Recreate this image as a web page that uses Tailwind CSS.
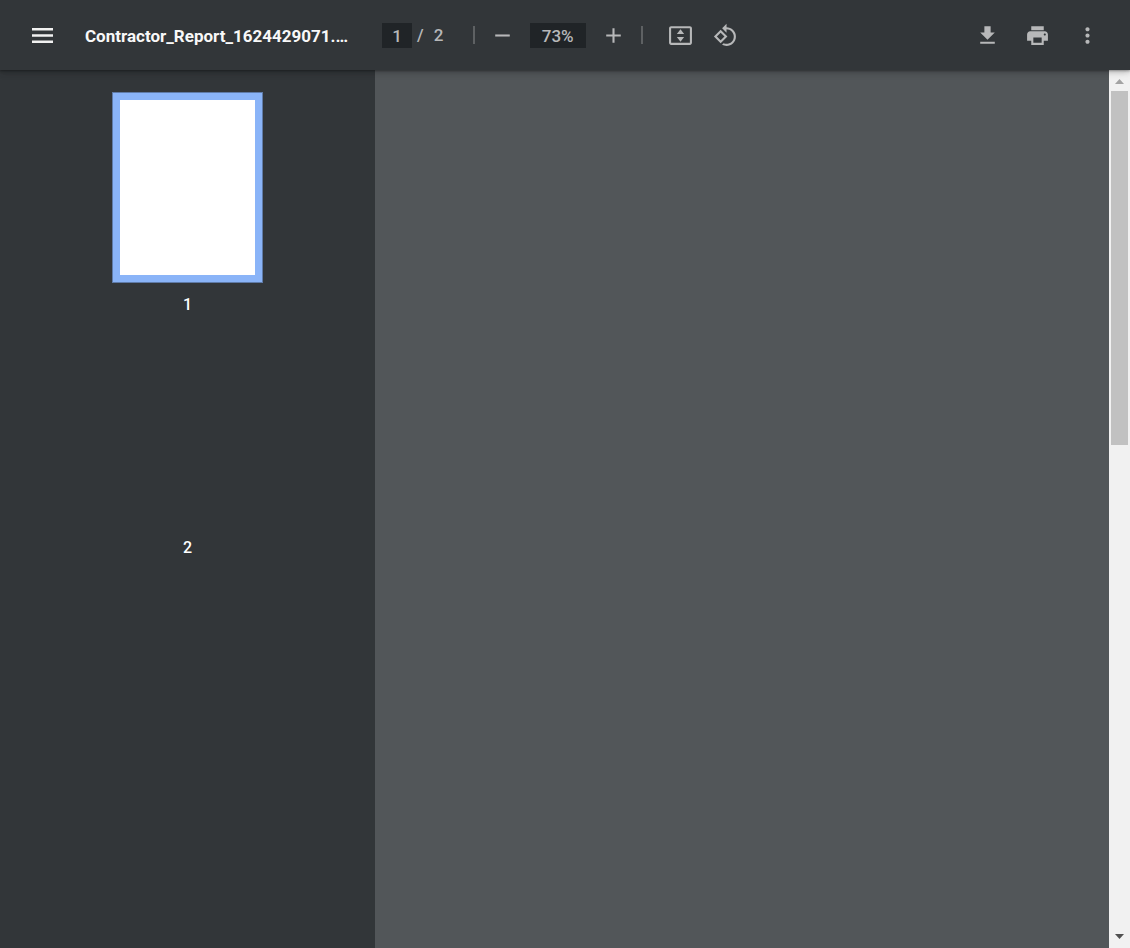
<!DOCTYPE html>
<html lang="en">
<head>
<meta charset="utf-8">
<meta name="viewport" content="width=device-width, initial-scale=1">
<title>Contractor_Report_1624429071.…</title>
<script src="https://cdn.jsdelivr.net/npm/@tailwindcss/browser@4"></script>
</head>
<body class="flex h-screen flex-col overflow-hidden bg-[#525659] font-['Roboto',sans-serif] text-white">
  <header class="relative z-10 flex h-[70px] shrink-0 items-center bg-[#323639] pr-[30px] pl-[30px] text-[#b7b8b9] shadow-[0_-2px_8px_rgba(0,0,0,0.09),0_4px_8px_rgba(0,0,0,0.06),0_1px_2px_rgba(0,0,0,0.3),0_2px_6px_rgba(0,0,0,0.15)]">
    <button type="button" aria-label="Menu" class="shrink-0 text-[#f1f1f1]">
      <svg class="size-[25px]" viewBox="0 0 25 25" fill="currentColor"><path d="M2 5h21v2.5H2zM2 11.25h21v2.5H2zM2 17.5h21V20H2z"/></svg>
    </button>
    <h1 class="ml-[30px] w-[275px] shrink-0 truncate pt-[2px] text-[17px] leading-6 font-bold text-[#f8f8f8]">Contractor_Report_1624429071.…</h1>
    <div class="ml-[22px] flex shrink-0 items-center text-[17px] leading-6 font-medium">
      <input type="text" aria-label="Page number" value="1" class="h-[25px] w-[30px] bg-[#202427] pt-[2px] text-center">
      <span class="ml-[5px]">/</span>
      <span class="ml-[10px] w-[10px]">2</span>
    </div>
    <div class="ml-[29px] h-[18px] w-[2px] shrink-0 bg-[#5e6163]"></div>
    <button type="button" aria-label="Zoom out" class="ml-[15px] shrink-0">
      <svg class="size-[25px]" viewBox="0 0 24 24" fill="currentColor"><path d="M19 13H5v-2h14z"/></svg>
    </button>
    <input type="text" aria-label="Zoom level" value="73%" class="ml-[15px] h-[25px] w-[56px] shrink-0 bg-[#202427] pt-[2px] text-center text-[17px] leading-6 font-medium">
    <button type="button" aria-label="Zoom in" class="ml-[15px] shrink-0">
      <svg class="size-[25px]" viewBox="0 0 24 24" fill="currentColor"><path d="M19 13h-6v6h-2v-6H5v-2h6V5h2v6h6z"/></svg>
    </button>
    <div class="ml-[15px] h-[18px] w-[2px] shrink-0 bg-[#5e6163]"></div>
    <button type="button" aria-label="Fit to page" class="ml-[25px] shrink-0">
      <svg class="size-[25px]" viewBox="0 0 24 24" fill="currentColor"><path d="M21 3H3c-1.1 0-2 .9-2 2v14c0 1.1.9 2 2 2h18c1.1 0 2-.9 2-2V5c0-1.1-.9-2-2-2zm0 16H3V5h18v14zM12 6l-3.5 4.5h7zM12 18l3.500-4.500h-7z"/></svg>
    </button>
    <button type="button" aria-label="Rotate counterclockwise" class="ml-[20px] shrink-0">
      <svg class="size-[25px]" viewBox="0 0 24 24" fill="currentColor"><path d="M7.34 6.41L.86 12.9l6.49 6.48 6.49-6.48-6.5-6.49zM3.69 12.9l3.66-3.66L11 12.9l-3.66 3.66-3.65-3.66zm15.67-6.26C17.61 4.88 15.3 4 13 4V.76L8.76 5 13 9.24V6c1.79 0 3.58.68 4.95 2.05 2.73 2.73 2.73 7.17 0 9.9C16.58 19.32 14.79 20 13 20c-.97 0-1.94-.21-2.84-.61l-1.49 1.49C10.02 21.62 11.51 22 13 22c2.3 0 4.61-.88 6.36-2.64 3.52-3.51 3.52-9.21 0-12.72z"/></svg>
    </button>
    <div class="ml-auto flex gap-[25px]">
      <button type="button" aria-label="Download">
        <svg class="size-[25px]" viewBox="0 0 24 24" fill="currentColor"><path d="M19 9h-4V3H9v6H5l7 7 7-7zM5 18v2h14v-2H5z"/></svg>
      </button>
      <button type="button" aria-label="Print">
        <svg class="size-[25px]" viewBox="0 0 24 24" fill="currentColor"><path d="M19 8H5c-1.66 0-3 1.34-3 3v6h4v4h12v-4h4v-6c0-1.66-1.34-3-3-3zm-3 11H8v-5h8v5zm3-7c-.55 0-1-.45-1-1s.45-1 1-1 1 .45 1 1-.45 1-1 1zm-1-9H6v4h12V3z"/></svg>
      </button>
      <button type="button" aria-label="More actions">
        <svg class="size-[25px]" viewBox="0 0 24 24" fill="currentColor"><path d="M12 8c1.1 0 2-.9 2-2s-.9-2-2-2-2 .9-2 2 .9 2 2 2zm0 2c-1.1 0-2 .9-2 2s.9 2 2 2 2-.9 2-2-.9-2-2-2zm0 6c-1.1 0-2 .9-2 2s.9 2 2 2 2-.9 2-2-.9-2-2-2z"/></svg>
      </button>
    </div>
  </header>
  <div class="flex min-h-0 flex-1">
    <nav aria-label="Page thumbnails" class="flex w-[375px] shrink-0 flex-col items-center bg-[#323639] pt-[22px] text-[16px] leading-6 font-medium">
      <button type="button" aria-label="Page 1" class="h-[191px] w-[151px] border border-[#5f7ba8] bg-[#8ab4f8] p-[7px]">
        <span class="block size-full bg-white"></span>
      </button>
      <div class="mt-[10px]">1</div>
      <button type="button" aria-label="Page 2" class="mt-[13px] h-[191px] w-[151px]"></button>
      <div class="mt-[15px]">2</div>
    </nav>
    <main class="min-w-0 flex-1 bg-[#525659]"></main>
    <div class="flex w-[21px] shrink-0 flex-col items-center bg-[#f1f1f1]">
      <button type="button" aria-label="Scroll up" class="flex h-[21px] w-full shrink-0 items-center justify-center pt-[2px] text-[#a3a3a3]">
        <svg class="h-[5px] w-[9px]" viewBox="0 0 9 5" fill="currentColor"><path d="M4.5 0L9 5H0z"/></svg>
      </button>
      <div class="h-[354px] w-[17px] bg-[#c1c1c1]"></div>
      <button type="button" aria-label="Scroll down" class="mt-auto flex h-[21px] w-full shrink-0 items-center justify-center pb-[2px] text-[#505050]">
        <svg class="h-[5px] w-[9px]" viewBox="0 0 9 5" fill="currentColor"><path d="M0 0h9L4.5 5z"/></svg>
      </button>
    </div>
  </div>
</body>
</html>
